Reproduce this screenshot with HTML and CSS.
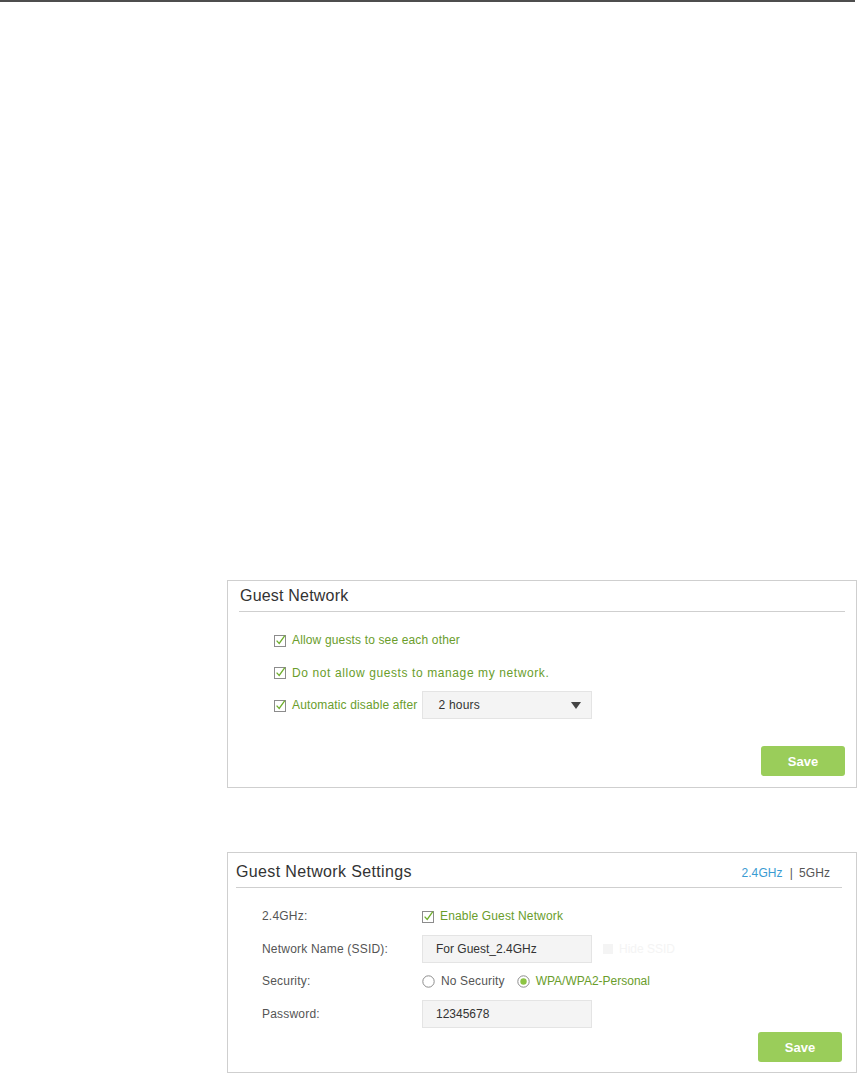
FILE: index.html
```html
<!DOCTYPE html>
<html lang="en">
<head>
<meta charset="utf-8">
<title>Guest Network</title>
<link rel="stylesheet" href="styles.css">
</head>
<body>
<div class="topbar"></div>
<main class="content">
  <section class="panel panel-guest">
    <header class="panel-head">Guest Network</header>
    <div class="panel-body guest-body">
      <div class="check-row">
        <svg class="cb" width="13" height="13" viewBox="0 0 13 13"><rect x="0.5" y="1.5" width="11" height="11" fill="#fff" stroke="#8c8c8c"/><path d="M2.6 6.6 L5.2 9.4 L10.8 1.6" fill="none" stroke="#6fae2d" stroke-width="1.3"/></svg>
        <span class="green">Allow guests to see each other</span>
      </div>
      <div class="check-row">
        <svg class="cb" width="13" height="13" viewBox="0 0 13 13"><rect x="0.5" y="1.5" width="11" height="11" fill="#fff" stroke="#8c8c8c"/><path d="M2.6 6.6 L5.2 9.4 L10.8 1.6" fill="none" stroke="#6fae2d" stroke-width="1.3"/></svg>
        <span class="green wide">Do not allow guests to manage my network.</span>
      </div>
      <div class="check-row">
        <svg class="cb" width="13" height="13" viewBox="0 0 13 13"><rect x="0.5" y="1.5" width="11" height="11" fill="#fff" stroke="#8c8c8c"/><path d="M2.6 6.6 L5.2 9.4 L10.8 1.6" fill="none" stroke="#6fae2d" stroke-width="1.3"/></svg>
        <span class="green">Automatic disable after</span>
        <div class="select">
          <span>2 hours</span>
          <svg class="arrow" width="10" height="7" viewBox="0 0 10 7"><path d="M0 0 H10 L5 7 Z" fill="#444"/></svg>
        </div>
      </div>
      <div class="actions">
        <button class="btn-save" type="button">Save</button>
      </div>
    </div>
  </section>

  <section class="panel panel-settings">
    <header class="panel-head head-settings">
      <span class="title">Guest Network Settings</span>
      <span class="bands"><span class="band-active">2.4GHz</span><span class="sep">|</span><span class="band">5GHz</span></span>
    </header>
    <div class="panel-body settings-body">
      <div class="form-row">
        <span class="label">2.4GHz:</span>
        <div class="control">
          <svg class="cb" width="13" height="13" viewBox="0 0 13 13"><rect x="0.5" y="1.5" width="11" height="11" fill="#fff" stroke="#8c8c8c"/><path d="M2.6 6.6 L5.2 9.4 L10.8 1.6" fill="none" stroke="#6fae2d" stroke-width="1.3"/></svg>
          <span class="green">Enable Guest Network</span>
        </div>
      </div>
      <div class="form-row">
        <span class="label">Network Name (SSID):</span>
        <div class="control">
          <div class="input">For Guest_2.4GHz</div>
          <span class="ghost"><span class="ghost-box"></span>Hide SSID</span>
        </div>
      </div>
      <div class="form-row">
        <span class="label">Security:</span>
        <div class="control">
          <svg class="radio" width="13" height="13" viewBox="0 0 13 13"><circle cx="6.5" cy="6.5" r="5.7" fill="#fff" stroke="#8c8c8c"/></svg>
          <span class="gray">No Security</span>
          <svg class="radio radio-second" width="13" height="13" viewBox="0 0 13 13"><circle cx="6.5" cy="6.5" r="5.7" fill="#fff" stroke="#8c8c8c"/><circle cx="6.5" cy="6.5" r="3.2" fill="#8cc443"/></svg>
          <span class="green tight">WPA/WPA2-Personal</span>
        </div>
      </div>
      <div class="form-row">
        <span class="label">Password:</span>
        <div class="control">
          <div class="input">12345678</div>
        </div>
      </div>
      <div class="actions actions-settings">
        <button class="btn-save" type="button">Save</button>
      </div>
    </div>
  </section>
</main>
</body>
</html>
```

FILE: styles.css
```css
html, body {
  margin: 0;
  padding: 0;
  background: #fff;
}

body {
  font-family: "Liberation Sans", Arial, sans-serif;
  font-size: 12px;
  color: #555;
}

.topbar {
  height: 2px;
  background: #4d4d4d;
  margin-right: 2px;
}

.content {
  padding: 578px 0 0 227px;
}

.panel {
  box-sizing: border-box;
  width: 630px;
  border: 1px solid #cfcfcf;
  background: #fff;
}

.panel-settings {
  margin-top: 64px;
}

.panel-head {
  margin: 0 11px;
  height: 30px;
  line-height: 30px;
  border-bottom: 1px solid #cfcfcf;
  font-size: 16px;
  color: #333;
  padding-left: 1px;
  letter-spacing: 0.2px;
}

.head-settings {
  box-sizing: content-box;
  margin: 0 14px 0 8px;
  height: 31px;
  padding: 3px 12px 0 0;
  line-height: 31px;
  display: flex;
  justify-content: space-between;
  align-items: center;
}

.title {
  letter-spacing: 0.35px;
}

.bands {
  font-size: 12px;
  letter-spacing: 0.1px;
  padding-top: 3px;
  display: flex;
  align-items: center;
}

.band-active {
  color: #3a9bd2;
}

.sep {
  color: #555;
  margin: 0 6px 0 7px;
}

.band {
  color: #555;
}

.guest-body {
  padding: 12px 11px 11px 46px;
}

.check-row {
  display: flex;
  align-items: center;
  height: 32.5px;
}

.cb {
  flex: none;
  margin-right: 5px;
}

.green {
  color: #6a9d2b;
  letter-spacing: 0.15px;
}

.wide {
  letter-spacing: 0.6px;
}

.tight {
  letter-spacing: 0;
}

.gray {
  color: #555;
  letter-spacing: 0.15px;
}

.select {
  box-sizing: border-box;
  margin-left: 4px;
  width: 170px;
  height: 28px;
  background: #f4f4f4;
  border: 1px solid #e4e4e4;
  display: flex;
  align-items: center;
  justify-content: space-between;
  padding: 0 10px 0 16px;
  color: #333;
  letter-spacing: 0.2px;
}

.arrow {
  margin-top: 1px;
}

.actions {
  display: flex;
  justify-content: flex-end;
  margin-top: 24.5px;
}

.btn-save {
  width: 84px;
  height: 30px;
  border: none;
  border-radius: 3px;
  background: #9acd5a;
  color: #fff;
  font-family: "Liberation Sans", Arial, sans-serif;
  font-size: 13px;
  font-weight: bold;
  padding: 0;
}

.settings-body {
  padding: 12px 14px 10px 34px;
}

.form-row {
  display: flex;
  align-items: center;
  height: 32.5px;
}

.label {
  width: 160px;
  flex: none;
  color: #555;
  letter-spacing: 0.2px;
}

.control {
  display: flex;
  align-items: center;
}

.input {
  box-sizing: border-box;
  width: 170px;
  height: 28px;
  line-height: 26px;
  background: #f4f4f4;
  border: 1px solid #e4e4e4;
  padding-left: 13px;
  color: #333;
}

.ghost {
  margin-left: 11px;
  color: #f4f4f4;
  display: flex;
  align-items: center;
}

.ghost-box {
  width: 10px;
  height: 10px;
  background: #f4f4f4;
  margin-right: 6px;
}

.radio {
  flex: none;
  margin-right: 6px;
}

.radio-second {
  margin-left: 12px;
}

.actions-settings {
  margin-top: 2px;
}
```
